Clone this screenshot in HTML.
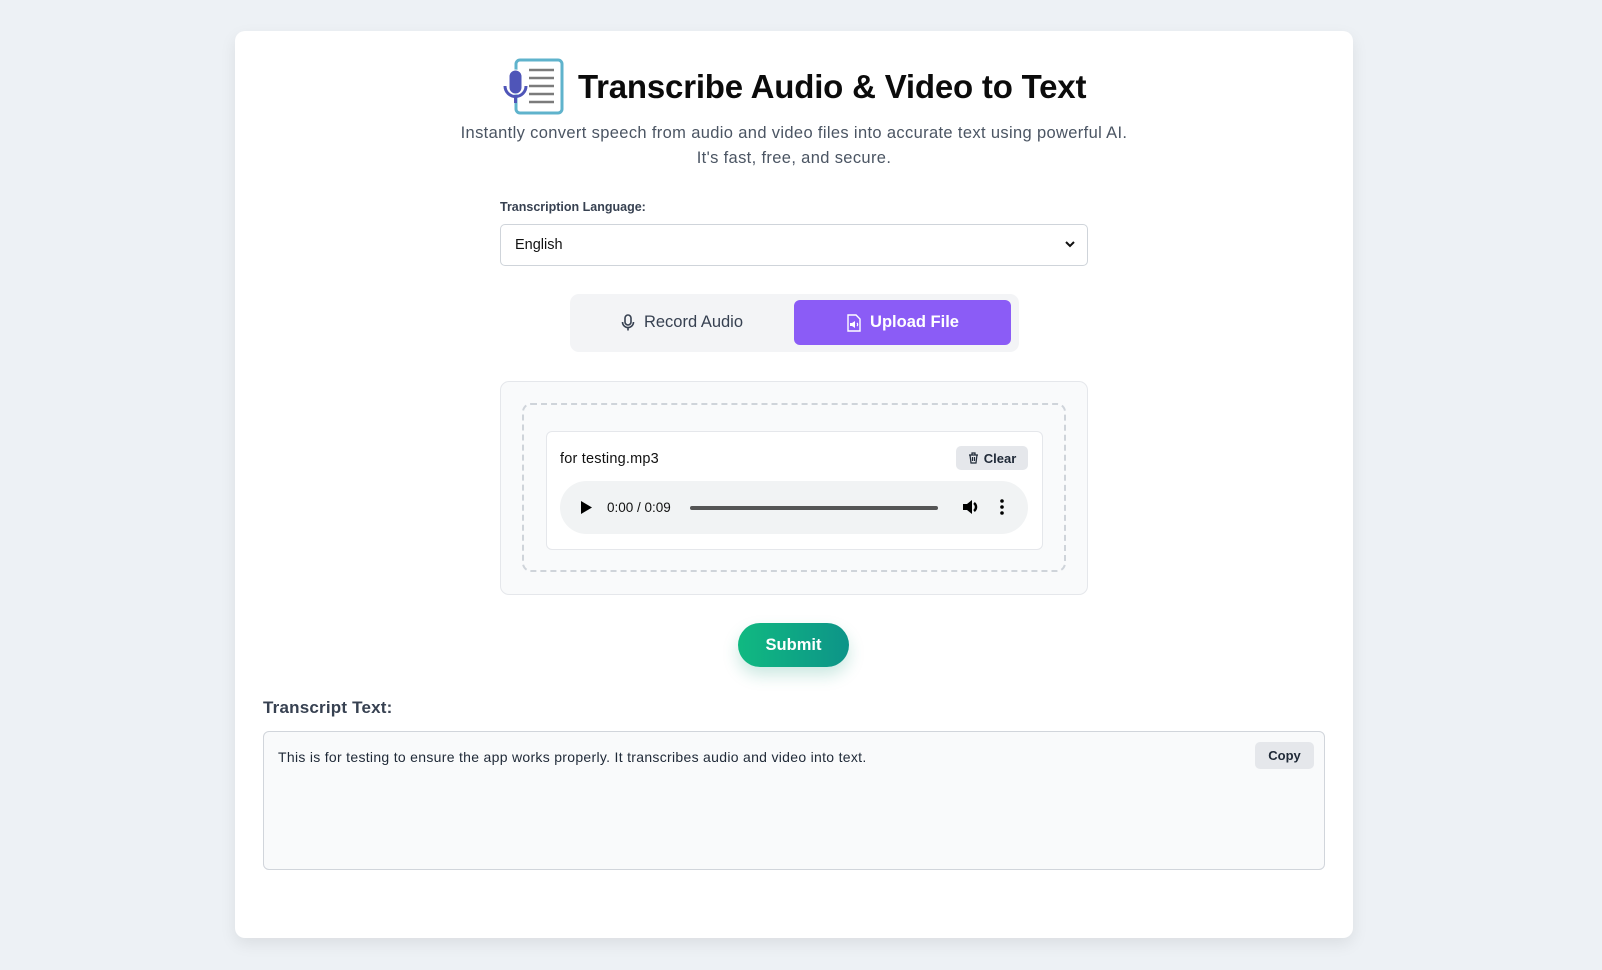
<!DOCTYPE html>
<html><head><meta charset="utf-8"><style>
*{box-sizing:border-box;margin:0;padding:0}
body{width:1602px;height:970px;background:#edf1f5;font-family:"Liberation Sans",sans-serif;position:relative;overflow:hidden;color:#1f2937}
.card{position:absolute;left:235px;top:31px;width:1118px;height:907px;background:#fff;border-radius:10px;box-shadow:0 6px 16px rgba(0,0,0,.08)}
.abs{position:absolute}
h1{position:absolute;left:578px;top:68px;font-size:33px;font-weight:bold;color:#0b0b0b;white-space:nowrap;letter-spacing:-0.2px}
.sub{position:absolute;left:235px;width:1118px;text-align:center;font-size:16.5px;color:#4b5563;line-height:25px;letter-spacing:0.35px}
.lbl{left:500px;top:200px;font-size:12.5px;font-weight:bold;color:#374151}
.sel{left:500px;top:224px;width:588px;height:42px;border:1px solid #cfd4da;border-radius:5px;font-size:14.5px;padding:12px 14px;color:#111}
.tabs{left:570px;top:294px;width:449px;height:58px;background:#f3f4f6;border-radius:9px}
.rec{left:570px;top:300px;width:224px;height:45px;font-size:16.5px;color:#374151;display:flex;align-items:center;justify-content:center;gap:9px}
.up{left:794px;top:300px;width:217px;height:45px;background:#8b5cf6;border-radius:6px;color:#fff;font-weight:bold;font-size:16.5px;display:flex;align-items:center;justify-content:center;gap:8px}
.box{left:500px;top:381px;width:588px;height:214px;background:#f9fafb;border:1px solid #e5e7eb;border-radius:9px}
.dash{left:522px;top:403px;width:544px;height:169px;border:2px dashed #cfd4da;border-radius:9px}
.inner{left:546px;top:431px;width:497px;height:119px;background:#fff;border:1px solid #e5e7eb;border-radius:6px}
.fn{left:560px;top:451px;font-size:14.5px;color:#111;letter-spacing:0.2px}
.clear{left:956px;top:446px;width:72px;height:24px;background:#e5e7eb;border-radius:5px;font-size:13px;font-weight:bold;color:#1f2937;display:flex;align-items:center;justify-content:center;gap:5px}
.player{left:560px;top:481px;width:468px;height:53px;background:#f1f3f4;border-radius:27px}
.submit{left:738px;top:623px;width:111px;height:44px;border-radius:22px;background:linear-gradient(90deg,#10b981,#0d9488);color:#fff;font-weight:bold;font-size:16.5px;display:flex;align-items:center;justify-content:center;box-shadow:0 8px 16px rgba(16,150,120,.22)}
.tt{left:263px;top:698px;font-size:17px;font-weight:bold;color:#374151;letter-spacing:0.2px}
.ta{left:263px;top:731px;width:1062px;height:139px;background:#f9fafb;border:1px solid #d1d5db;border-radius:6px}
.txt{left:278px;top:749px;font-size:14px;color:#1f2937;letter-spacing:0.3px}
.copy{left:1255px;top:742px;width:59px;height:27px;background:#e5e7eb;border-radius:5px;font-size:13px;font-weight:bold;color:#1f2937;display:flex;align-items:center;justify-content:center}
</style></head><body>
<div class="card"></div>
<svg class="abs" style="left:503px;top:58px" width="62" height="57" viewBox="0 0 62 57">
<rect x="13" y="2" width="46" height="53" rx="4" fill="#fff" stroke="#5fb3cc" stroke-width="3"/>
<g stroke="#7b7b7b" stroke-width="2.5"><line x1="26" y1="12" x2="51" y2="12"/><line x1="26" y1="20" x2="51" y2="20"/><line x1="26" y1="28" x2="51" y2="28"/><line x1="26" y1="36" x2="51" y2="36"/><line x1="26" y1="44" x2="51" y2="44"/></g>
<rect x="6" y="12" width="13" height="24" rx="6.5" fill="#4f55b8" stroke="#fff" stroke-width="1"/>
<path d="M2 28 a10.5 10.5 0 0 0 21 0" fill="none" stroke="#4f55b8" stroke-width="3"/>
<line x1="12.5" y1="38" x2="12.5" y2="45" stroke="#4f55b8" stroke-width="3"/>
</svg>
<h1>Transcribe Audio &amp; Video to Text</h1>
<div class="sub" style="top:121px">Instantly convert speech from audio and video files into accurate text using powerful AI.</div>
<div class="sub" style="top:146px">It's fast, free, and secure.</div>
<div class="abs lbl">Transcription Language:</div>
<div class="abs sel">English<svg style="position:absolute;right:12px;top:16px" width="10" height="7" viewBox="0 0 10 7"><path d="M1 1l4 4 4-4" fill="none" stroke="#111" stroke-width="2"/></svg></div>
<div class="abs tabs"></div>
<div class="abs rec"><svg width="14" height="17" viewBox="0 0 14 17"><rect x="4" y="1" width="6" height="10" rx="3" fill="none" stroke="#374151" stroke-width="1.6"/><path d="M1.5 8a5.5 5.5 0 0 0 11 0M7 13.5v3" fill="none" stroke="#374151" stroke-width="1.6"/></svg>Record Audio</div>
<div class="abs up"><svg width="16" height="18" viewBox="0 0 16 18"><path d="M2 1h8l4 4v12H2z" fill="none" stroke="#fff" stroke-width="1.4"/><path d="M4 9h2l3-2v7l-3-2H4z" fill="#fff"/><path d="M11 9a2 2 0 0 1 0 3" fill="none" stroke="#fff" stroke-width="1.2"/></svg>Upload File</div>
<div class="abs box"></div>
<div class="abs dash"></div>
<div class="abs inner"></div>
<div class="abs fn">for testing.mp3</div>
<div class="abs clear"><svg width="11" height="12" viewBox="0 0 11 12"><path d="M1 3h9M4 3V1h3v2M2 3l1 8h5l1-8M4.5 5v4M6.5 5v4" fill="none" stroke="#1f2937" stroke-width="1.2"/></svg>Clear</div>
<div class="abs player">
<svg style="position:absolute;left:21px;top:20px" width="11" height="13"><path d="M0 0l11 6.5L0 13z" fill="#000"/></svg>
<div style="position:absolute;left:47px;top:19px;font-size:13.5px;color:#111">0:00 / 0:09</div>
<div style="position:absolute;left:130px;top:25px;width:248px;height:4px;background:#555;border-radius:2px"></div>
<svg style="position:absolute;left:402px;top:17px" width="18" height="18" viewBox="0 0 18 18"><path d="M1 6h4l5-4v14l-5-4H1z" fill="#000"/><path d="M12 5a5 5 0 0 1 0 8" fill="none" stroke="#000" stroke-width="2.5"/></svg>
<svg style="position:absolute;left:440px;top:18px" width="4" height="16"><circle cx="2" cy="2" r="1.8"/><circle cx="2" cy="8" r="1.8"/><circle cx="2" cy="14" r="1.8"/></svg>
</div>
<div class="abs submit">Submit</div>
<div class="abs tt">Transcript Text:</div>
<div class="abs ta"></div>
<div class="abs txt">This is for testing to ensure the app works properly. It transcribes audio and video into text.</div>
<div class="abs copy">Copy</div>
</body></html>
